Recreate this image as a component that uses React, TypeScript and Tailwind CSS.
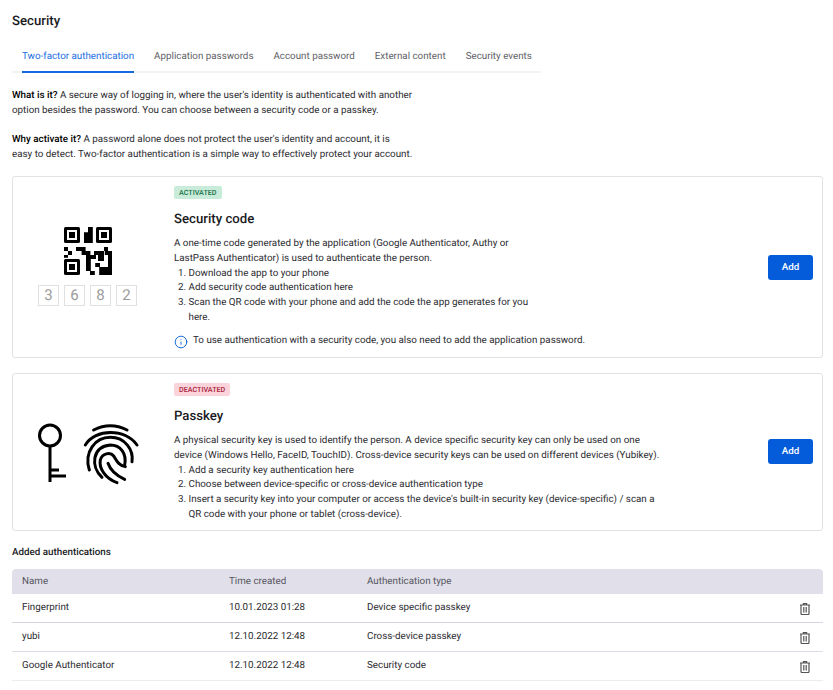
import { Info } from "lucide-react";

const tabs = ["Application passwords", "Account password", "External content", "Security events"];

const rows = [
  { name: "Fingerprint", time: "10.01.2023 01:28", type: "Device specific passkey", line: "border-[#d6d6e0]" },
  { name: "yubi", time: "12.10.2022 12:48", type: "Cross-device passkey", line: "border-[#dcdce4]" },
  { name: "Google Authenticator", time: "12.10.2022 12:48", type: "Security code", line: "border-[#ebebf0]" },
];

const QrIcon = () => (
  <svg width="48" height="48" viewBox="0 0 12 12" fill="#000">
    <path fillRule="evenodd" d="M.4 0h3.200a.4.4 0 0 1 .4.4v3.200a.4.4 0 0 1-.4.4H.4a.4.4 0 0 1-.4-.4V.4A.4.4 0 0 1 .4 0Zm.35.750v2.500h2.500V.750Z" />
    <rect x="1.250" y="1.250" width="1.500" height="1.500" />
    <path fillRule="evenodd" d="M8.400 0h3.200a.4.4 0 0 1 .4.4v3.200a.4.4 0 0 1-.4.4H8.400a.4.4 0 0 1-.4-.4V.4a.4.4 0 0 1 .4-.4Zm.35.750v2.500h2.500V.750Z" />
    <rect x="9.250" y="1.250" width="1.500" height="1.500" />
    <path fillRule="evenodd" d="M.4 8h3.200a.4.4 0 0 1 .4.4v3.200a.4.4 0 0 1-.4.4H.4a.4.4 0 0 1-.4-.4V8.400a.4.4 0 0 1 .4-.4Zm.35.750v2.500h2.500V8.750Z" />
    <rect x="1.250" y="9.250" width="1.500" height="1.500" />
    <path d="M6 0h1.200v4H5V1.300h1Z" />
    <path d="M0 5h1v1H0ZM1 6h1v1H1ZM0 7h1v.700H0ZM3 5h2.400v1H3ZM4.400 6h2.200v1H4.400ZM5.500 7H8v1H6.700v3H5.500ZM6.500 11h1.200v1H6.500ZM7.500 6H10v1H7.500ZM8.500 7H10v1.500H8.500ZM10 5h1v1h-1ZM10.200 6H12v1h-1.800ZM11 7h1v3h-1ZM7.800 9H9v1H7.800ZM8.800 10H12v2H8.800Z" />
  </svg>
);

const KeyIcon = () => (
  <svg width="30" height="60" viewBox="0 0 30 60" fill="none" stroke="#000" strokeWidth="3" className="shrink-0">
    <circle cx="13" cy="12.500" r="10.500" />
    <path d="M13 23v36M13 47h9M13 53h16" />
  </svg>
);

const FingerprintIcon = () => (
  <svg width="60" height="66" viewBox="0 0 180 198" fill="none" stroke="#000" strokeWidth="9" strokeLinecap="round" className="shrink-0">
    <path d="M35 30Q85 5 135 30" />
    <path d="M10 75C40 25 130 25 165 75" />
    <path d="M22 150C5 95 40 52 85 52C130 52 155 90 150 125" />
    <path d="M60 172C25 140 30 80 85 75C115 75 135 100 128 135" />
    <path d="M105 188C70 175 50 145 55 120C60 100 85 95 95 108C105 125 110 135 130 140" />
    <path d="M78 130C85 150 105 168 128 178" />
  </svg>
);

const TrashIcon = () => (
  <svg width="10" height="12" viewBox="0 0 10 12" fill="none" stroke="#555" strokeWidth="1.200" className="shrink-0">
    <path d="M0 2h10M3.400 2V.7h3.200V2M1 2v8.500a1 1 0 0 0 1 1h6a1 1 0 0 0 1-1V2" />
    <path d="M3.800 4v5.500M6.200 4v5.500" />
  </svg>
);

const AddButton = () => (
  <button className="w-[45px] h-[25px] shrink-0 rounded-[3px] bg-[#045cdb] text-white text-[9.800px] font-medium">Add</button>
);

export default function App() {
  return (
    <div className="w-[833px] h-[690px] overflow-hidden bg-white px-3 pt-[14px] font-['Roboto',sans-serif] text-[9.800px] leading-[14.700px] text-[#2b2b30] [text-rendering:geometricPrecision]">
      <h1 className="text-[13.200px] leading-[16px] font-medium text-[#1a1a1e]">Security</h1>

      <div className="mt-[10px] w-[529px] flex items-start gap-[20px] h-[33px] border-b-2 border-[#f3f3f6] pl-[10px]">
        <div className="h-[33px] border-b-2 border-[#1668e0] pt-[10px] leading-[13px] text-[#1b6ee3]">Two-factor authentication</div>
        {tabs.map((t) => (
          <div key={t} className="pt-[10px] leading-[13px] text-[#5f5f68]">{t}</div>
        ))}
      </div>

      <p className="mt-[16px] w-[420px]">
        <b className="font-medium text-black">What is it?</b> A secure way of logging in, where the user's identity is authenticated with another<br />
        option besides the password. You can choose between a security code or a passkey.
      </p>
      <p className="mt-[14.700px] w-[420px]">
        <b className="font-medium text-black">Why activate it?</b> A password alone does not protect the user's identity and account, it is<br />
        easy to detect. Two-factor authentication is a simple way to effectively protect your account.
      </p>

      <section className="mt-[13px] h-[182px] w-[811px] flex items-center rounded-[3px] border border-[#e2e2e6]">
        <div className="w-[161px] shrink-0 flex flex-col items-center pr-[12px]">
          <QrIcon />
          <div className="mt-[10px] flex gap-[5px]">
            {[3, 6, 8, 2].map((n) => (
              <div key={n} className="w-[21px] h-[21px] border border-[#e0e0e0] flex items-center justify-center text-[15px] text-[#9a9a9a]">{n}</div>
            ))}
          </div>
        </div>
        <div className="flex-1 self-start pt-[9px]">
          <span className="inline-block h-[13px] rounded-[2px] bg-[#c8ecd9] px-[5px] text-[7.200px] leading-[13px] font-medium text-[#16714a] align-top">ACTIVATED</span>
          <h2 className="mt-[11px] text-[13.200px] leading-[18px] font-medium text-[#1a1a1e]">Security code</h2>
          <p className="mt-[8px] w-[366px]">A one-time code generated by the application (Google Authenticator, Authy or LastPass Authenticator) is used to authenticate the person.</p>
          <ol className="w-[366px] pl-[14.500px]">
            <li className="list-decimal">Download the app to your phone</li>
            <li className="list-decimal">Add security code authentication here</li>
            <li className="list-decimal">Scan the QR code with your phone and add the code the app generates for you here.</li>
          </ol>
          <div className="mt-[9px] flex items-center gap-[5px]">
            <Info size={14} strokeWidth={1.600} className="text-[#0b63d8] shrink-0" />
            <span>To use authentication with a security code, you also need to add the application password.</span>
          </div>
        </div>
        <div className="pr-[9px] pt-[2px]"><AddButton /></div>
      </section>

      <section className="mt-[15px] h-[158px] w-[811px] flex items-center rounded-[3px] border border-[#e2e2e6]">
        <div className="w-[161px] shrink-0 flex items-center gap-[15px] pl-[24px] pt-[3px]">
          <KeyIcon />
          <FingerprintIcon />
        </div>
        <div className="flex-1 self-start pt-[9px]">
          <span className="inline-block h-[13px] rounded-[2px] bg-[#fbd3da] px-[5px] text-[7.200px] leading-[13px] font-medium text-[#a8233b] align-top">DEACTIVATED</span>
          <h2 className="mt-[11px] text-[13.200px] leading-[18px] font-medium text-[#1a1a1e]">Passkey</h2>
          <p className="mt-[8px] w-[490px]">A physical security key is used to identify the person. A device specific security key can only be used on one device (Windows Hello, FaceID, TouchID). Cross-device security keys can be used on different devices (Yubikey).</p>
          <ol className="w-[490px] pl-[14.500px]">
            <li className="list-decimal">Add a security key authentication here</li>
            <li className="list-decimal">Choose between device-specific or cross-device authentication type</li>
            <li className="list-decimal">Insert a security key into your computer or access the device's built-in security key (device-specific) / scan a QR code with your phone or tablet (cross-device).</li>
          </ol>
        </div>
        <div className="pr-[9px]"><AddButton /></div>
      </section>

      <h3 className="mt-[15px] leading-[14px] font-medium text-[#1a1a1e]">Added authentications</h3>

      <div className="mt-[9px] w-[811px]">
        <div className="h-[25px] pt-[3px] rounded-t-[4px] bg-[#e1e0ea] flex items-center text-[#55555e]">
          <div className="w-[217px] pl-[10px]">Name</div>
          <div className="w-[138px]">Time created</div>
          <div>Authentication type</div>
        </div>
        {rows.map((r) => (
          <div key={r.name} className={`h-[29px] pt-[2px] flex items-center border-b ${r.line}`}>
            <div className="w-[217px] pl-[10px]">{r.name}</div>
            <div className="w-[138px]">{r.time}</div>
            <div className="flex-1">{r.type}</div>
            <div className="pr-[13px]"><TrashIcon /></div>
          </div>
        ))}
      </div>
    </div>
  );
}
